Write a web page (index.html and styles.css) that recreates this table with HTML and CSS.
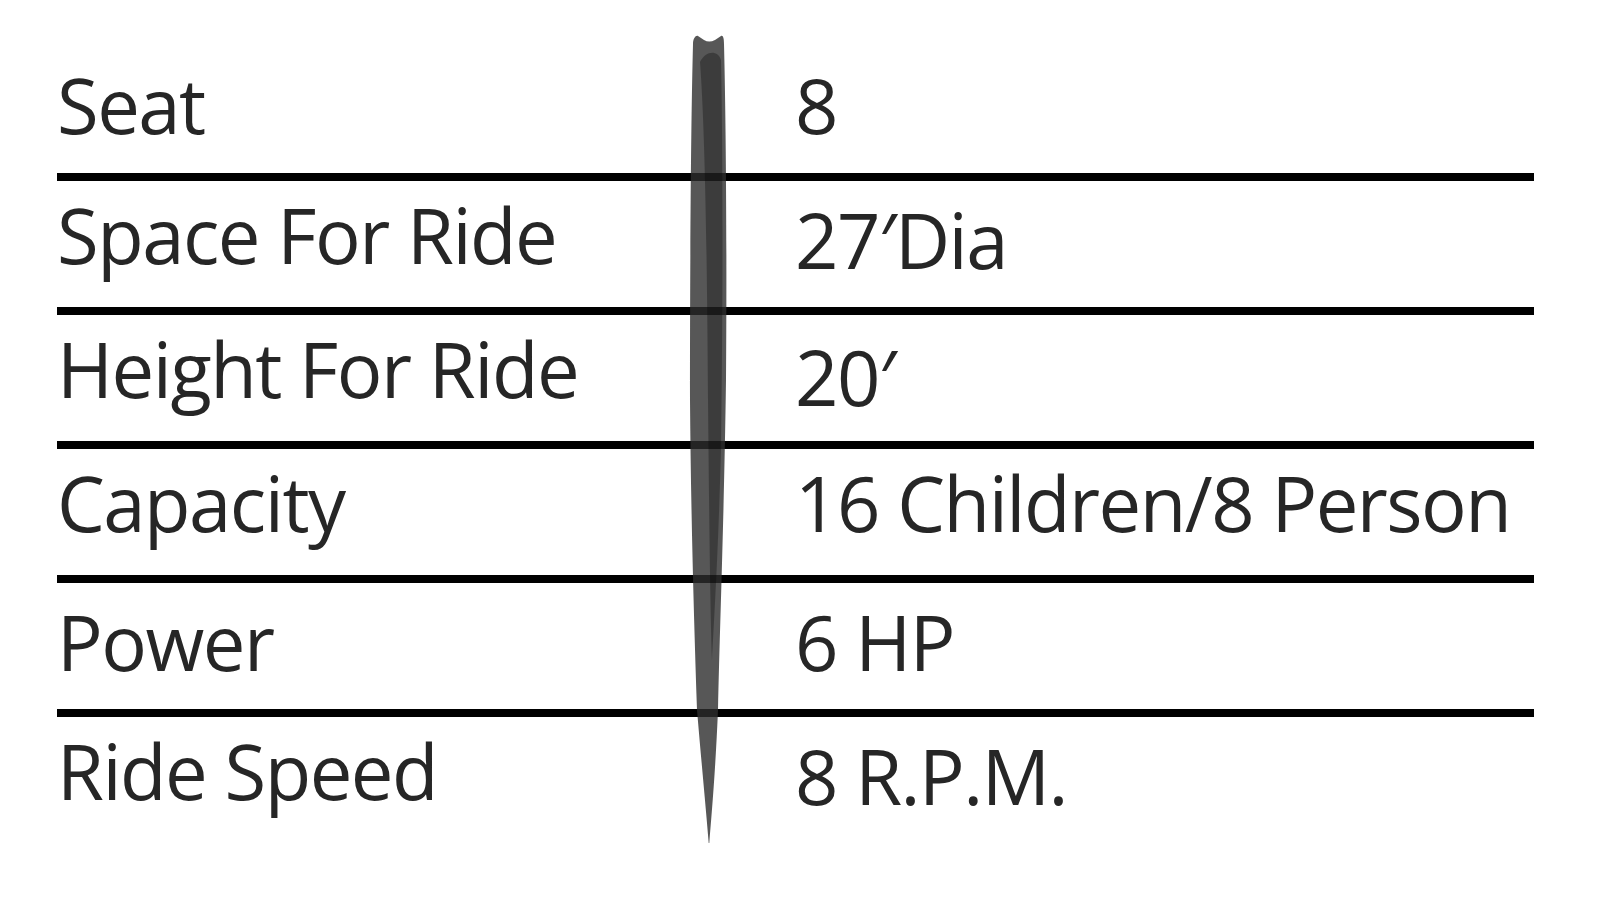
FILE: index.html
```html
<!DOCTYPE html>
<html lang="en">
<head>
<meta charset="utf-8">
<title>Ride Specifications</title>
<link rel="stylesheet" href="styles.css">
</head>
<body>
<div class="spec">
  <div class="row first"><div class="key">Seat</div><div class="val">8</div></div>
  <div class="row"><div class="key">Space For Ride</div><div class="val low">27′Dia</div></div>
  <div class="row"><div class="key">Height For Ride</div><div class="val lower">20′</div></div>
  <div class="row"><div class="key">Capacity</div><div class="val">16 Children/8 Person</div></div>
  <div class="row power"><div class="key">Power</div><div class="val">6 HP</div></div>
  <div class="row last"><div class="key">Ride Speed</div><div class="val low">8 R.P.M.</div></div>
  <svg class="divider" viewBox="680 30 60 830" width="60" height="830" aria-hidden="true">
    <path class="d-outer" d="M693,44 C693,38 696,35 698,36 L704,40 Q709,43 715,40 L721,36 C723,35 724,38 724,44 C726,120 727,250 726,380 C724,520 720,620 718,710 C715,780 711,820 709,847 C707,820 703,780 697,710 C694,620 691,520 690,400 C690,250 691,120 693,44 Z"/>
    <path class="d-inner" d="M700,62 C706,50 718,50 721,60 C723,150 723,300 721,450 C718,560 714,620 712,660 C710,600 709,500 708,400 C707,250 705,130 700,62 Z"/>
  </svg>
</div>
</body>
</html>
```

FILE: styles.css
```css
html, body {
  margin: 0;
  padding: 0;
  background: #ffffff;
}

body {
  font-family: "Open Sans", "Noto Sans", "Liberation Sans", sans-serif;
  color: #262626;
}

.spec {
  position: relative;
  width: 1477px;
  margin-left: 57px;
  padding-top: 47px;
}

.row {
  display: grid;
  grid-template-columns: 738px 1fr;
  height: 126px;
  border-bottom: 8px solid #000;
  box-sizing: content-box;
}

.row.last {
  border-bottom: none;
}

.key, .val {
  font-size: 76px;
  line-height: 104px;
  letter-spacing: -1.5px;
  padding-top: 2px;
  white-space: nowrap;
}

.row.first .key, .row.first .val {
  padding-top: 6px;
}

.row.power .key, .row.power .val {
  padding-top: 7px;
}

.val.low {
  padding-top: 7px;
}

.val.lower {
  padding-top: 10px;
}

.divider {
  position: absolute;
  left: 623px;
  top: 30px;
}

.d-outer {
  fill: #2d2d2d;
  fill-opacity: 0.8;
}

.d-inner {
  fill: #000;
  fill-opacity: 0.3;
}
```
